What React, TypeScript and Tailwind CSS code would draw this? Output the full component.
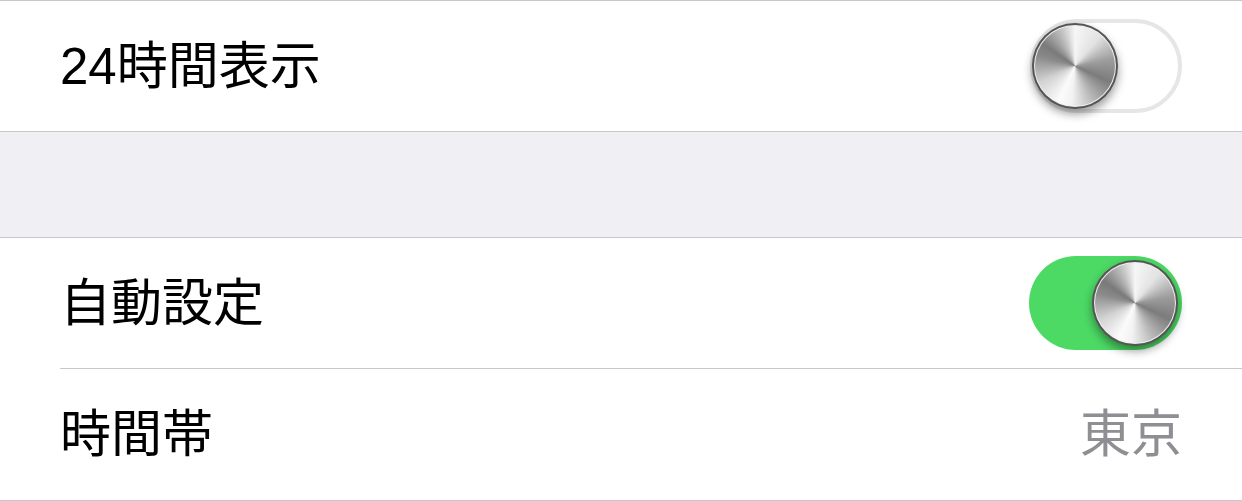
import React from 'react';

function Knob() {
  return (
    <div className="w-[86px] h-[86px] rounded-full p-[2px] bg-[#555555] shadow-[0_5px_10px_rgba(0,0,0,0.4)]">
      <div className="w-full h-full rounded-full p-[1px] bg-[#eeeeee]">
        <div className="w-full h-full rounded-full bg-[conic-gradient(from_0deg,#f6f6f6_0deg,#e2e2e2_40deg,#9c9c9c_80deg,#7c7c7c_115deg,#b4b4b4_150deg,#f2f2f2_185deg,#fbfbfb_205deg,#d2d2d2_245deg,#8a8a8a_285deg,#7a7a7a_305deg,#c4c4c4_340deg,#f6f6f6_360deg)]" />
      </div>
    </div>
  );
}

function Toggle({ on }: { on: boolean }) {
  return (
    <div
      className={
        on
          ? 'w-[153px] h-[94px] rounded-full bg-[#4cd964] flex items-center justify-end pr-[4px]'
          : 'w-[152px] h-[94px] rounded-full bg-white border-4 border-[#e6e6e6] flex items-center justify-start'
      }
    >
      {on ? <Knob /> : <div className="-ml-[2px]"><Knob /></div>}
    </div>
  );
}

function Row({ label, children }: { label: string; children?: React.ReactNode }) {
  return (
    <div className="flex items-center justify-between h-[130px] pl-[60px] pr-[60px] bg-white">
      <span className="text-[51px] leading-none text-black">{label}</span>
      {children}
    </div>
  );
}

export default function App() {
  return (
    <main className="w-[1242px] h-[501px] bg-[#efeff4] font-['Liberation_Sans','Noto_Sans_CJK_JP',sans-serif] overflow-hidden">
      <div className="h-px bg-[#c8c7cc]" />
      <Row label="24時間表示">
        <Toggle on={false} />
      </Row>
      <div className="h-px bg-[#c8c7cc]" />
      <div className="h-[105px]" />
      <div className="h-px bg-[#c8c7cc]" />
      <Row label="自動設定">
        <Toggle on />
      </Row>
      <div className="bg-white pl-[60px]">
        <div className="h-px bg-[#c8c7cc]" />
      </div>
      <div className="flex items-center justify-between h-[131px] pl-[60px] pr-[60px] bg-white">
        <span className="text-[51px] leading-none text-black">時間帯</span>
        <span className="text-[51px] leading-none text-[#8e8e93]">東京</span>
      </div>
      <div className="h-px bg-[#c8c7cc]" />
    </main>
  );
}
